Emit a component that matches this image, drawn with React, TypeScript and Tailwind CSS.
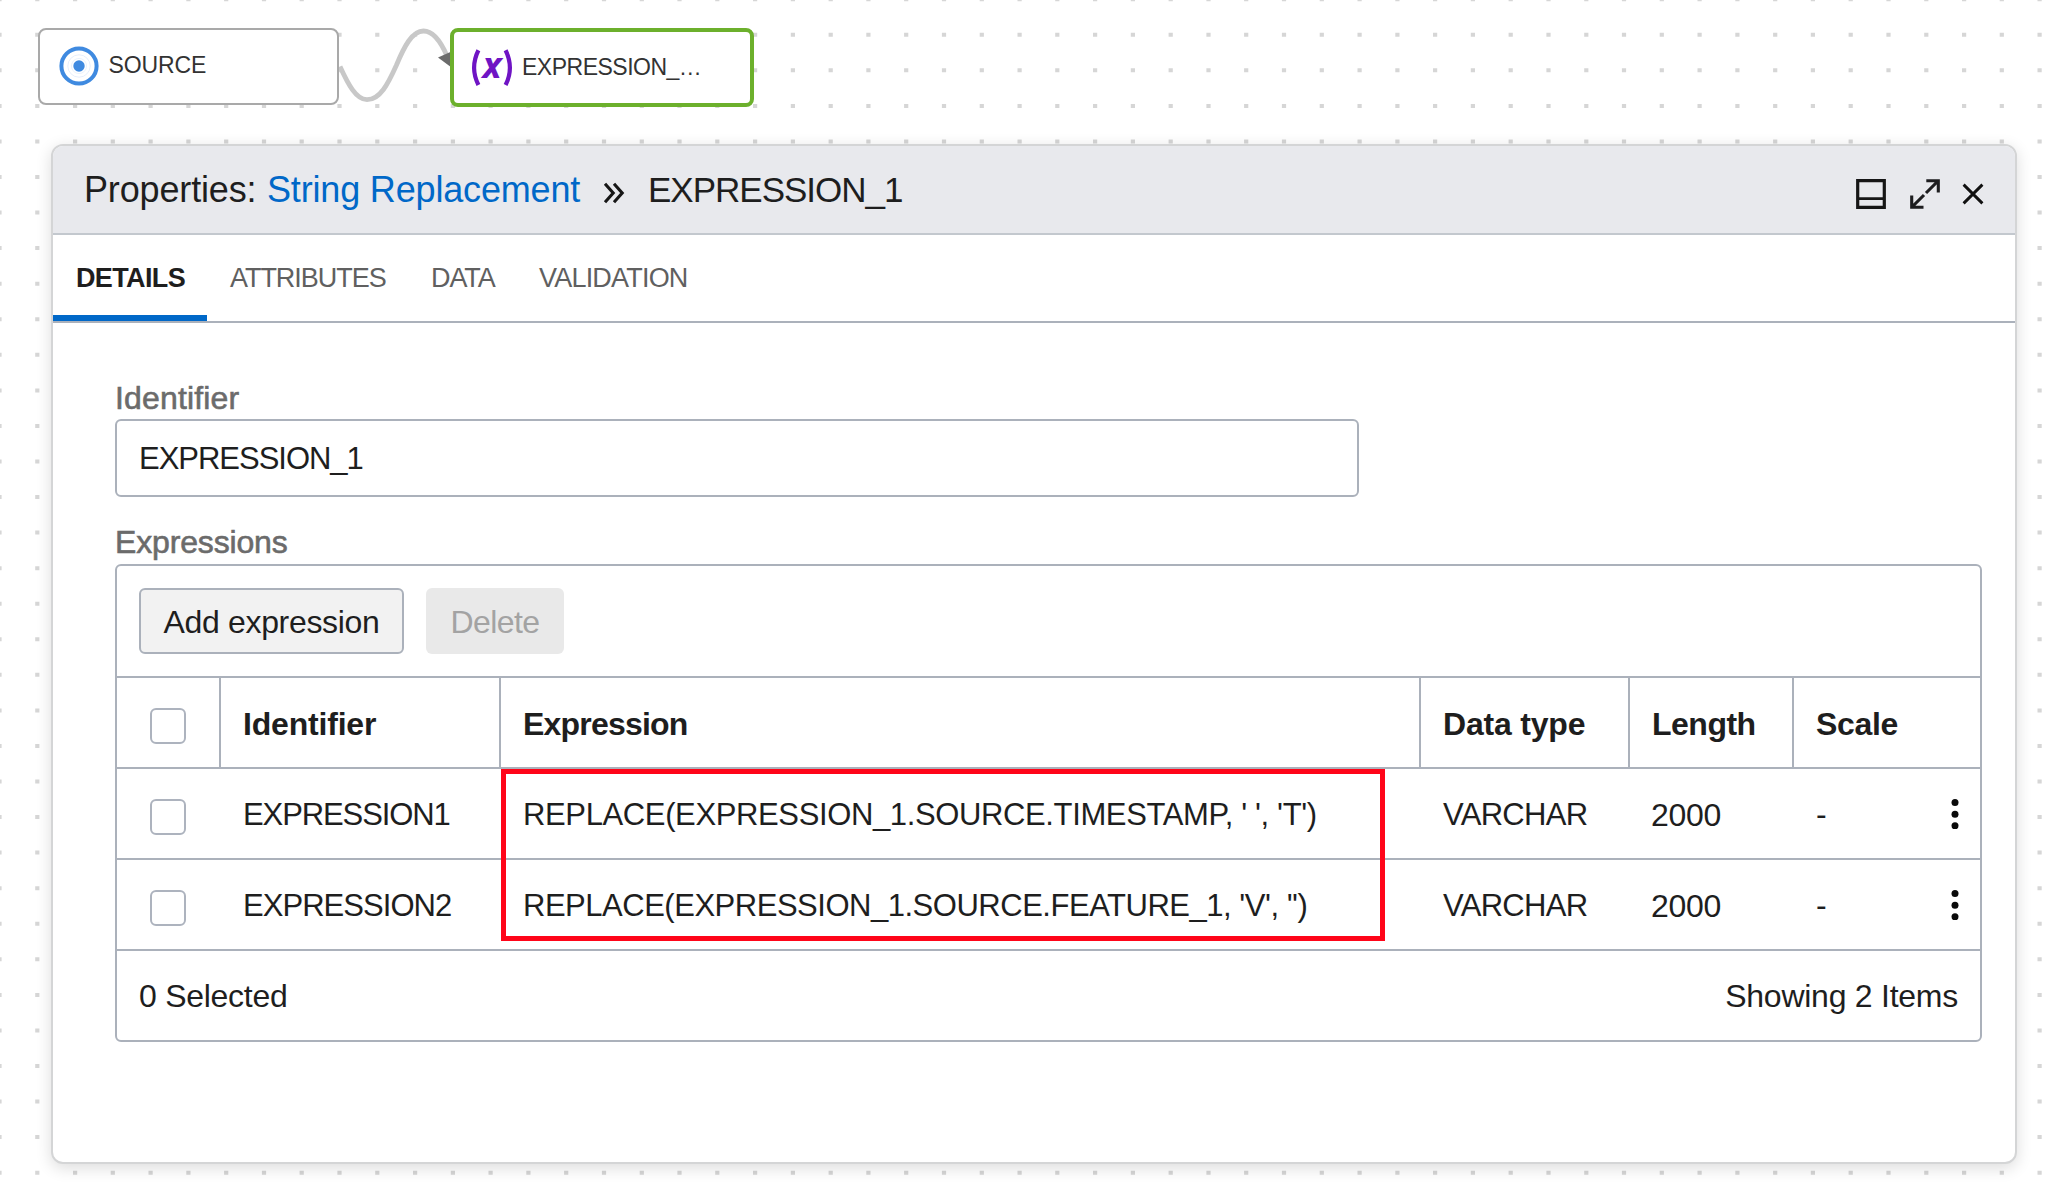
import React from "react";

const DOT_X = 37.78;
const DOT_Y = 35.56;

/** Grid of small square dots that fills the canvas. */
function DotGrid() {
  let d = "";
  for (let r = 0; r <= 33; r++) {
    for (let c = 0; c <= 54; c++) {
      const x = (c * DOT_X - 2.6).toFixed(1);
      const y = (r * DOT_Y - 2.8).toFixed(1);
      d += `M${x} ${y}h4.2v4h-4.2z`;
    }
  }
  return (
    <svg className="absolute inset-0" width="2050" height="1188" viewBox="0 0 2050 1188" aria-hidden="true">
      <path d={d} fill="#d6d6d6" />
    </svg>
  );
}

function Wire() {
  return (
    <svg className="absolute left-[330px] top-[20px]" width="130" height="100" viewBox="330 20 130 100" fill="none" aria-hidden="true">
      <path
        d="M340 66.5C348 84 356 99.7 367 99.7C380 99.7 388 84 396.5 65C404 47 412 31 423.5 31C433 31 441 42 447 56"
        stroke="#c8c8c8"
        strokeWidth="4.8"
      />
      <path d="M438 57.5L451.5 51.5V67.5Z" fill="#6b6b6b" />
    </svg>
  );
}

function SourceIcon() {
  return (
    <svg width="40" height="40" viewBox="0 0 40 40" fill="none" aria-hidden="true">
      <circle cx="20" cy="20" r="17.6" stroke="#3f8ae0" strokeWidth="4" />
      <circle cx="20" cy="20" r="11.2" stroke="#dfeafa" strokeWidth="0.8" />
      <circle cx="20" cy="20" r="7.6" stroke="#e3edfb" strokeWidth="0.8" />
      <circle cx="20" cy="20" r="5.7" fill="#3f8ae0" />
    </svg>
  );
}

function ExpressionIcon() {
  return (
    <svg className="overflow-visible" width="42" height="38" viewBox="471 48 42 38" fill="none" aria-hidden="true">
      <path d="M478.4 49.3Q469.8 66.7 478.4 84" stroke="#6f14c4" strokeWidth="4.2" />
      <path d="M505.6 49.3Q514.2 66.7 505.6 84" stroke="#6f14c4" strokeWidth="4.2" />
      <text x="492" y="76.7" textAnchor="middle" fill="#6f14c4" className="font-['Open_Sans',sans-serif] text-[36px] font-bold italic leading-none">
        x
      </text>
    </svg>
  );
}

function DockIcon() {
  return (
    <svg width="30" height="30" viewBox="0 0 30 30" fill="none" stroke="#161616" strokeWidth="3.2" aria-hidden="true">
      <path d="M1.7 1.7H28.3V28.3H1.7Z" />
      <path d="M2 19.7H28" strokeWidth="2.8" />
    </svg>
  );
}

function ExpandIcon() {
  return (
    <svg width="30" height="30" viewBox="0 0 30 30" fill="none" stroke="#1d1d1f" strokeWidth="3.1" aria-hidden="true">
      <path d="M16.3 1.7H28.3V13.5M27.5 2.5L16 14" />
      <path d="M13.5 28.3H1.7V16.5M2.5 27.5L14 16" />
    </svg>
  );
}

function CloseIcon() {
  return (
    <svg width="22" height="22" viewBox="0 0 22 22" fill="none" stroke="#111" strokeWidth="2.9" aria-hidden="true">
      <path d="M1.6 1.6L20.4 20.4M20.4 1.6L1.6 20.4" />
    </svg>
  );
}

function ChevronsIcon() {
  return (
    <svg width="22" height="22" viewBox="0 0 22 22" fill="none" stroke="#161616" strokeWidth="3.1" aria-hidden="true">
      <path d="M2 1.8L10.2 11L2 20.2M11 1.8L19.2 11L11 20.2" />
    </svg>
  );
}

function Kebab() {
  return (
    <svg width="8" height="30" viewBox="0 0 8 30" fill="#0a0a0a" aria-hidden="true">
      <circle cx="4" cy="3.6" r="3.5" />
      <circle cx="4" cy="15.2" r="3.5" />
      <circle cx="4" cy="26.8" r="3.5" />
    </svg>
  );
}

function Checkbox() {
  return <span className="mt-[7px] ml-[33px] size-9 rounded-md border-2 border-[#adb3be] bg-white" />;
}

const ROW = "grid h-[91px] grid-cols-[104px_280px_920px_209px_164px_186px] border-b-2 border-[#abb1bb]";

const rows = [
  {
    id: "EXPRESSION1",
    idCls: "tracking-[-1.1px]",
    expr: "REPLACE(EXPRESSION_1.SOURCE.TIMESTAMP, ' ', 'T')",
    exprCls: "tracking-[-0.37px]",
  },
  {
    id: "EXPRESSION2",
    idCls: "tracking-[-0.96px]",
    expr: "REPLACE(EXPRESSION_1.SOURCE.FEATURE_1, 'V', '')",
    exprCls: "tracking-[-0.48px]",
  },
];

function HeadCell({ label, cls }: { label: string; cls: string }) {
  return <div className={`flex items-center border-[#abb1bb] pt-[3px] pl-[22px] font-bold ${cls}`}>{label}</div>;
}

export default function App() {
  return (
    <div className="relative h-[1188px] w-[2050px] overflow-hidden bg-white font-['Liberation_Sans',Arial,sans-serif] text-[#1e1e1e]">
      <DotGrid />
      <Wire />

      {/* Diagram nodes */}
      <div className="absolute left-[38px] top-[28px] flex h-[77px] w-[301px] items-center rounded-[8px] border-2 border-[#a9a9a9] bg-white pb-[2px] pl-[18.5px] text-[23px] text-[#333]">
        <SourceIcon />
        <span className="ml-[10px] tracking-[-0.1px]">SOURCE</span>
      </div>
      <div className="absolute left-[450px] top-[28px] flex h-[79px] w-[304px] items-center rounded-[8px] border-4 border-[#6cb02c] bg-white pl-[17px] text-[23px] text-[#333]">
        <ExpressionIcon />
        <span className="ml-[9px] tracking-[-0.5px]">EXPRESSION_…</span>
      </div>

      {/* Properties panel */}
      <section className="relative mt-[144px] ml-[51px] flex h-[1020px] w-[1966px] flex-col overflow-hidden rounded-xl border-2 border-[#d4d5d6] bg-white shadow-[0_4px_16px_rgba(0,0,0,0.14)]">
        <header className="flex h-[89px] shrink-0 items-center border-b-2 border-[#c3c8ce] bg-[#e8e9ed] pt-px pr-[31px] pl-[31px] text-[36px]">
          <span className="w-[183px] tracking-[-0.15px]">Properties:</span>
          <a className="w-[337px] tracking-[-0.17px] text-[#0068c8]">String Replacement</a>
          <span className="mt-[6px] ml-[-1px] w-[45px]">
            <ChevronsIcon />
          </span>
          <span className="text-[35px] tracking-[-1px]">EXPRESSION_1</span>
          <div className="mt-[7px] ml-auto flex items-center">
            <DockIcon />
            <span className="ml-6">
              <ExpandIcon />
            </span>
            <span className="ml-[22px]">
              <CloseIcon />
            </span>
          </div>
        </header>

        <nav className="flex h-[88px] shrink-0 border-b-2 border-[#abb1bb] text-[27px] text-[#606060]">
          <div className="flex w-[154px] items-center border-b-[6px] border-[#0068c8] pt-[6px] pl-[23px] font-bold tracking-[-0.64px] text-[#1e1e1e]">
            DETAILS
          </div>
          <div className="flex w-[202px] items-center pl-[23px] tracking-[-1.04px]">ATTRIBUTES</div>
          <div className="flex w-[108px] items-center pl-[22px] tracking-[-1.1px]">DATA</div>
          <div className="flex items-center pl-[22px] tracking-[-0.8px]">VALIDATION</div>
        </nav>

        <div className="flex flex-col pt-[54px] pl-[62px] text-[32px]">
          <label className="h-[42px] leading-[43px] tracking-[0.15px] text-[#6b6b6b] [-webkit-text-stroke:0.6px_#6b6b6b]">Identifier</label>
          <div className="flex h-[78px] w-[1244px] items-center rounded-md border-2 border-[#abb1bb] pt-[3px] pl-[22px] text-[31px] tracking-[-1.02px]">
            EXPRESSION_1
          </div>
          <label className="mt-[23px] h-[44px] leading-[45px] tracking-[-0.16px] text-[#6b6b6b] [-webkit-text-stroke:0.6px_#6b6b6b]">Expressions</label>

          <div className="relative w-[1867px] rounded-md border-2 border-[#abb1bb]">
            <div className="flex h-[112px] items-center gap-[22px] border-b-2 border-[#abb1bb] pl-[22px]">
              <button className="h-[66px] w-[265px] rounded-md border-2 border-[#abb1bb] bg-[#f2f2f2] pt-[2px] tracking-[-0.34px] whitespace-nowrap">Add expression</button>
              <button className="h-[66px] w-[138px] rounded-md bg-[#e9e9e9] pt-[2px] tracking-[-0.6px] text-[#a3a3a3]">Delete</button>
            </div>

            <div className={ROW}>
              <div className="flex items-center border-r-2 border-[#abb1bb]">
                <Checkbox />
              </div>
              <HeadCell label="Identifier" cls="border-r-2 tracking-[-0.19px]" />
              <HeadCell label="Expression" cls="border-r-2 tracking-[-0.8px]" />
              <HeadCell label="Data type" cls="border-r-2 tracking-[-0.2px]" />
              <HeadCell label="Length" cls="border-r-2 tracking-[-0.5px]" />
              <HeadCell label="Scale" cls="tracking-[-0.33px]" />
            </div>

            {rows.map((r) => (
              <div key={r.id} className={ROW}>
                <div className="flex items-center">
                  <Checkbox />
                </div>
                <div className={`flex items-center pt-[3px] pl-[22px] text-[31px] ${r.idCls}`}>{r.id}</div>
                <div className={`flex items-center pt-[3px] pl-[22px] text-[31px] whitespace-pre ${r.exprCls}`}>{r.expr}</div>
                <div className="flex items-center pt-[3px] pl-[22px] text-[31px] tracking-[-0.7px]">VARCHAR</div>
                <div className="flex items-center pt-[2px] pl-[21px] tracking-[-0.3px]">2000</div>
                <div className="flex items-center justify-between pt-px pr-[21px] pl-[22px]">
                  <span>-</span>
                  <Kebab />
                </div>
              </div>
            ))}

            <div className="flex h-[89px] items-center justify-between px-[22px] pt-px">
              <span className="tracking-[-0.27px]">0 Selected</span>
              <span className="tracking-[-0.25px]">Showing 2 Items</span>
            </div>

            {/* Highlight over the expression values */}
            <div className="absolute left-[384px] top-[203px] h-[172px] w-[884px] border-[5px] border-[#ff0519]" />
          </div>
        </div>
      </section>
    </div>
  );
}
